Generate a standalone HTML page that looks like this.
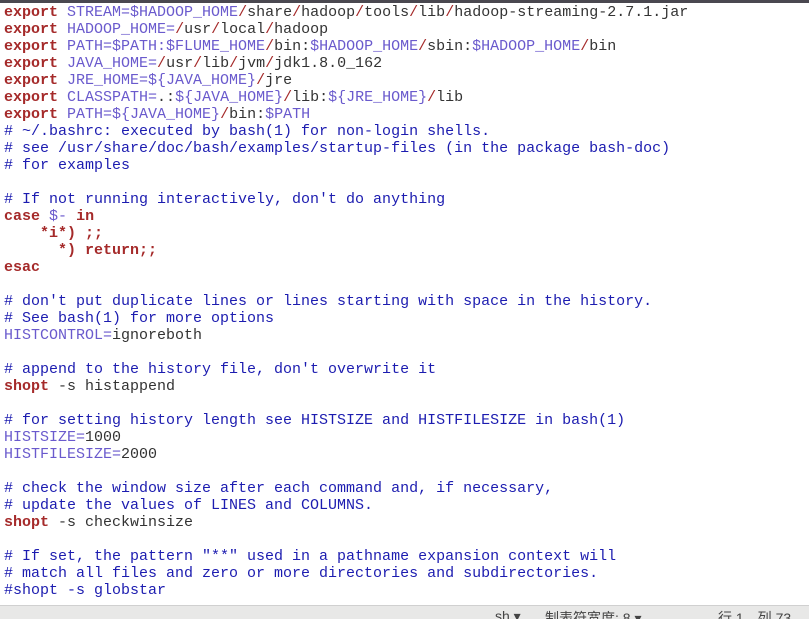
<!DOCTYPE html>
<html><head><meta charset="utf-8"><style>
html,body{margin:0;padding:0;}
body{width:809px;height:618px;overflow:hidden;background:#fff;position:relative;}
.top{position:absolute;left:0;top:0;width:809px;height:3px;background:#4a4850;}
pre{position:absolute;left:4px;top:4px;margin:0;font-family:"Liberation Mono",monospace;font-size:15px;line-height:17px;color:#333;}
.k{color:#a52a2a;font-weight:bold;}
.v{color:#6a5acd;}
.s{color:#a52a2a;}
.c{color:#1c1cb0;}
.status{position:absolute;left:0;top:605px;width:809px;height:13px;background:#e8e8e7;border-top:1px solid #d0d0d0;font-family:"Liberation Sans","Noto Sans CJK SC",sans-serif;font-size:14px;color:#444;overflow:hidden;}
.status span{position:absolute;top:2px;white-space:nowrap;}
</style></head><body>
<div class="top"></div>
<pre><span class="k">export</span> <span class="v">STREAM=$HADOOP_HOME</span><span class="s">/</span>share<span class="s">/</span>hadoop<span class="s">/</span>tools<span class="s">/</span>lib<span class="s">/</span>hadoop-streaming-2.7.1.jar
<span class="k">export</span> <span class="v">HADOOP_HOME=</span><span class="s">/</span>usr<span class="s">/</span>local<span class="s">/</span>hadoop
<span class="k">export</span> <span class="v">PATH=$PATH:$FLUME_HOME</span><span class="s">/</span>bin:<span class="v">$HADOOP_HOME</span><span class="s">/</span>sbin:<span class="v">$HADOOP_HOME</span><span class="s">/</span>bin
<span class="k">export</span> <span class="v">JAVA_HOME=</span><span class="s">/</span>usr<span class="s">/</span>lib<span class="s">/</span>jvm<span class="s">/</span>jdk1.8.0_162
<span class="k">export</span> <span class="v">JRE_HOME=${JAVA_HOME}</span><span class="s">/</span>jre
<span class="k">export</span> <span class="v">CLASSPATH=</span>.:<span class="v">${JAVA_HOME}</span><span class="s">/</span>lib:<span class="v">${JRE_HOME}</span><span class="s">/</span>lib
<span class="k">export</span> <span class="v">PATH=${JAVA_HOME}</span><span class="s">/</span>bin:<span class="v">$PATH</span>
<span class="c"># ~/.bashrc: executed by bash(1) for non-login shells.</span>
<span class="c"># see /usr/share/doc/bash/examples/startup-files (in the package bash-doc)</span>
<span class="c"># for examples</span>

<span class="c"># If not running interactively, don't do anything</span>
<span class="k">case</span> <span class="v">$-</span> <span class="k">in</span>
    <span class="k">*i*) ;;</span>
      <span class="k">*) return;;</span>
<span class="k">esac</span>

<span class="c"># don't put duplicate lines or lines starting with space in the history.</span>
<span class="c"># See bash(1) for more options</span>
<span class="v">HISTCONTROL=</span>ignoreboth

<span class="c"># append to the history file, don't overwrite it</span>
<span class="k">shopt</span> -s histappend

<span class="c"># for setting history length see HISTSIZE and HISTFILESIZE in bash(1)</span>
<span class="v">HISTSIZE=</span>1000
<span class="v">HISTFILESIZE=</span>2000

<span class="c"># check the window size after each command and, if necessary,</span>
<span class="c"># update the values of LINES and COLUMNS.</span>
<span class="k">shopt</span> -s checkwinsize

<span class="c"># If set, the pattern "**" used in a pathname expansion context will</span>
<span class="c"># match all files and zero or more directories and subdirectories.</span>
<span class="c">#shopt -s globstar</span></pre>
<div class="status"><span style="left:495px">sh ▾</span><span style="left:545px">制表符宽度: 8 ▾</span><span style="left:718px">行 1，列 73</span></div>
</body></html>
